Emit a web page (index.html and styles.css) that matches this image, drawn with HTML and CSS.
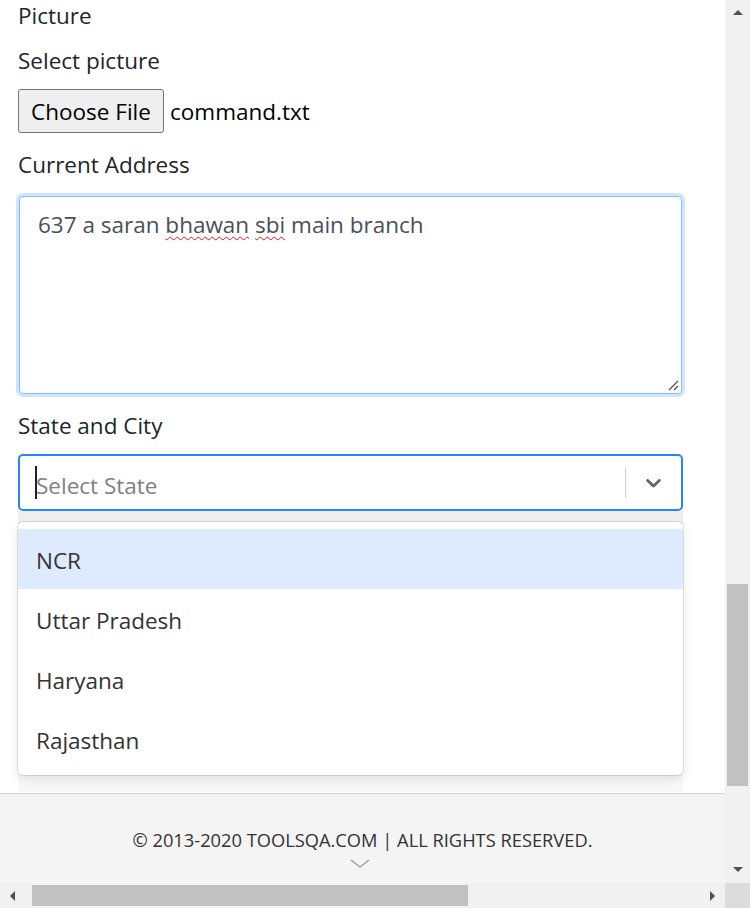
FILE: index.html
```html
<!DOCTYPE html>
<html>
<head>
<meta charset="utf-8">
<link rel="stylesheet" href="styles.css">
</head>
<body>
<div class="window">
  <div class="viewport">
    <main class="form">
      <div class="label first">Picture</div>
      <div class="label">Select picture</div>
      <div class="file-row">
        <span class="file-btn">Choose File</span>
        <span class="file-name">command.txt</span>
      </div>
      <div class="label">Current Address</div>
      <div class="textarea">
        <span>637 a saran <span class="spell">bhawan</span> <span class="spell">sbi</span> main branch</span>
        <svg class="grip" width="12" height="12" viewBox="0 0 12 12"><path d="M11 2 L2 11 M11 7 L7 11" stroke="#555" stroke-width="1.3" fill="none"/></svg>
      </div>
      <div class="label">State and City</div>
      <div class="select-wrap">
        <div class="select">
          <div class="value">
            <span class="caret"></span>
            <span class="placeholder">Select State</span>
          </div>
          <div class="indicators">
            <span class="sep"></span>
            <svg class="chevron" width="25" height="25" viewBox="0 0 20 20"><path fill="#666" d="M4.516 7.548c0.436-0.446 1.043-0.481 1.576 0l3.908 3.747 3.908-3.747c0.533-0.481 1.141-0.446 1.574 0 0.436 0.445 0.408 1.197 0 1.615-0.406 0.418-4.695 4.502-4.695 4.502-0.217 0.223-0.502 0.335-0.787 0.335s-0.57-0.112-0.789-0.335c0 0-4.287-4.084-4.695-4.502s-0.436-1.170 0-1.615z"/></svg>
          </div>
        </div>
        <div class="menu">
          <div class="option active">NCR</div>
          <div class="option">Uttar Pradesh</div>
          <div class="option">Haryana</div>
          <div class="option">Rajasthan</div>
        </div>
        <div class="behind"></div>
      </div>
    </main>
    <footer class="footer">
      <span class="copy">© 2013-2020 TOOLSQA.COM | ALL RIGHTS RESERVED.</span>
      <svg class="down" width="20" height="10" viewBox="0 0 20 10"><path d="M1 1 L10 8 L19 1" stroke="#9a9a9a" stroke-width="1.3" fill="none"/></svg>
    </footer>
  </div>
  <div class="vscroll">
    <span class="arrow up"></span>
    <div class="vtrack"><div class="vthumb"></div></div>
    <span class="arrow dn"></span>
  </div>
  <div class="hscroll">
    <span class="arrow lf"></span>
    <div class="htrack"><div class="hthumb"></div></div>
    <span class="arrow rt"></span>
  </div>
  <div class="corner"></div>
</div>
</body>
</html>
```
FILE: styles.css
```css
html, body {
  margin: 0;
  padding: 0;
  overflow: hidden;
  background: #fff;
}
body {
  font-family: "Open Sans", "Noto Sans", sans-serif;
  color: #212529;
}
.window {
  display: grid;
  grid-template-columns: 725px 25px;
  grid-template-rows: 883px 25px;
  width: 750px;
  height: 908px;
}
.viewport {
  display: flex;
  flex-direction: column;
  overflow: hidden;
  background: #fff;
}
.form {
  padding: 0 42px 0 18px;
  height: 793px;
  flex: none;
  box-sizing: border-box;
}
.label {
  font-size: 22.5px;
  line-height: 30px;
  height: 30px;
  margin-top: 18px;
}
.label.first {
  margin-top: 0;
  line-height: 31px;
  height: 31px;
}
.label + .label { margin-top: 15px; }
.file-row {
  display: flex;
  align-items: center;
  margin-top: 13px;
  height: 44px;
  font-size: 22.5px;
}
.file-btn {
  box-sizing: border-box;
  height: 44px;
  width: 146px;
  display: flex;
  align-items: center;
  justify-content: center;
  background: #efefef;
  border: 1px solid #767676;
  border-radius: 3px;
  color: #000;
  white-space: nowrap;
}
.file-name {
  margin-left: 6px;
  color: #000;
}
.file-row + .label { margin-top: 17px; }
.textarea {
  position: relative;
  box-sizing: border-box;
  margin: 16px 1px 0 1px;
  height: 198px;
  border: 1px solid #80bdff;
  border-radius: 4px;
  box-shadow: 0 0 0 3px #cfe4fd;
  padding: 13px 18px;
  font-size: 22.5px;
  line-height: 30px;
  color: #495057;
}
.spell {
  text-decoration: underline wavy #e81123;
  text-decoration-thickness: 1px;
  text-underline-offset: 3px;
}
.grip {
  position: absolute;
  right: 2px;
  bottom: 2px;
}
.textarea + .label { margin-top: 17px; }
.select-wrap {
  position: relative;
  margin-top: 13px;
}
.select {
  box-sizing: border-box;
  height: 57px;
  border: 2px solid #2684ff;
  border-radius: 5px;
  display: flex;
  align-items: center;
  background: #fff;
  position: relative;
  z-index: 2;
}
.value {
  flex: 1;
  display: flex;
  align-items: center;
  padding-left: 15px;
  font-size: 22.5px;
  padding-top: 5px;
}
.caret {
  width: 2px;
  height: 33px;
  background: #222;
  margin-right: -1px;
  margin-top: -5px;
}
.placeholder { color: #808080; }
.indicators {
  display: flex;
  align-items: center;
  height: 100%;
}
.sep {
  width: 1px;
  height: 30px;
  background: #ccc;
}
.chevron {
  margin: 0 15px 0 15px;
}
.behind {
  height: 281px;
  background: linear-gradient(#eeeeee, #f6f6f6 20%, #f8f8f8);
}
.menu {
  position: absolute;
  top: 68px;
  left: 0;
  right: 0;
  z-index: 3;
  background: #fff;
  border-radius: 5px;
  box-shadow: 0 0 0 1px rgba(0,0,0,0.1), 0 4px 11px rgba(0,0,0,0.1);
  padding: 7px 0 6px;
}
.option {
  height: 60px;
  line-height: 64px;
  padding-left: 18px;
  font-size: 22.5px;
  color: #333;
}
.option.active { background: #deebff; }
.footer {
  flex: none;
  height: 90px;
  box-sizing: border-box;
  border-top: 1px solid #d0d0d0;
  background: #f4f4f4;
  display: flex;
  flex-direction: column;
  align-items: center;
  padding-top: 34px;
  font-size: 18.3px;
  color: #333;
}
.copy { line-height: 24px; }
.down { margin-top: 7px; margin-left: -6px; }
.vscroll {
  background: #f1f1f1;
  display: flex;
  flex-direction: column;
  align-items: center;
}
.vtrack {
  flex: 1;
  width: 100%;
  position: relative;
}
.vthumb {
  position: absolute;
  left: 2px;
  right: 2px;
  top: 559px;
  height: 202px;
  background: #c1c1c1;
}
.hscroll {
  background: #f1f1f1;
  display: flex;
  align-items: center;
}
.htrack {
  flex: 1;
  height: 100%;
  position: relative;
}
.hthumb {
  position: absolute;
  top: 2px;
  bottom: 2px;
  left: 7px;
  width: 436px;
  background: #c1c1c1;
}
.corner { background: #dcdcdc; }
.arrow {
  width: 0;
  height: 0;
  flex: none;
  border-style: solid;
  border-color: transparent;
}
.arrow.up {
  margin-top: 10px;
  margin-bottom: 10px;
  border-width: 0 5.5px 5px;
  border-bottom-color: #505050;
}
.arrow.dn {
  margin-top: 10px;
  margin-bottom: 11px;
  border-width: 5px 5.5px 0;
  border-top-color: #505050;
}
.arrow.lf {
  margin-left: 10px;
  margin-right: 10px;
  border-width: 5.5px 5px 5.5px 0;
  border-right-color: #505050;
}
.arrow.rt {
  margin-left: 10px;
  margin-right: 10px;
  border-width: 5.5px 0 5.5px 5px;
  border-left-color: #505050;
}
```
